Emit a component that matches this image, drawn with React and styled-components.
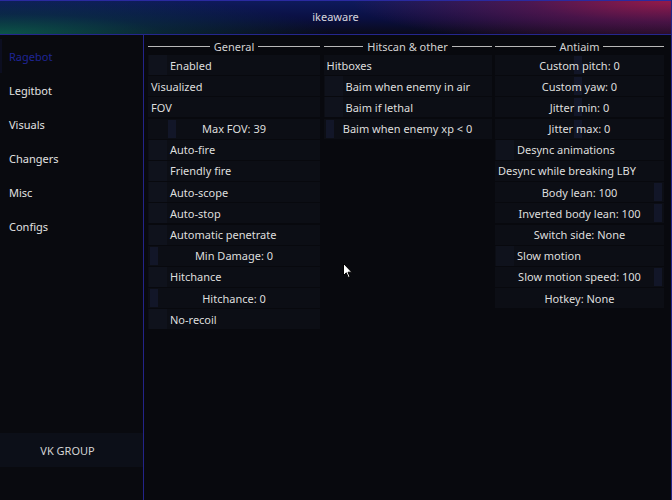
import React from "react";
import styled, { createGlobalStyle } from "styled-components";

const GlobalStyle = createGlobalStyle`
  html, body {
    margin: 0;
    padding: 0;
    background: #08090e;
  }
  body {
    font-family: "Noto Sans", "Open Sans", sans-serif;
    font-size: 11px;
    color: #dcdcdc;
  }
`;

const general = [
  { type: "check", label: "Enabled" },
  { type: "label", label: "Visualized" },
  { type: "label", label: "FOV" },
  { type: "slider", label: "Max FOV: 39", pos: 11 },
  { type: "check", label: "Auto-fire" },
  { type: "check", label: "Friendly fire" },
  { type: "check", label: "Auto-scope" },
  { type: "check", label: "Auto-stop" },
  { type: "check", label: "Automatic penetrate" },
  { type: "slider", label: "Min Damage: 0", pos: 0 },
  { type: "check", label: "Hitchance" },
  { type: "slider", label: "Hitchance: 0", pos: 0 },
  { type: "check", label: "No-recoil" },
];

const hitscan = [
  { type: "label", label: "Hitboxes" },
  { type: "check", label: "Baim when enemy in air" },
  { type: "check", label: "Baim if lethal" },
  { type: "slider", label: "Baim when enemy xp < 0", pos: 0 },
];

const antiaim = [
  { type: "slider", label: "Custom pitch: 0", pos: 49 },
  { type: "slider", label: "Custom yaw: 0", pos: 49 },
  { type: "slider", label: "Jitter min: 0", pos: 49 },
  { type: "slider", label: "Jitter max: 0", pos: 49 },
  { type: "check", label: "Desync animations" },
  { type: "label", label: "Desync while breaking LBY" },
  { type: "slider", label: "Body lean: 100", pos: 100 },
  { type: "slider", label: "Inverted body lean: 100", pos: 100 },
  { type: "bind", label: "Switch side: None" },
  { type: "check", label: "Slow motion" },
  { type: "slider", label: "Slow motion speed: 100", pos: 100 },
  { type: "bind", label: "Hotkey: None" },
];

const tabs = ["Ragebot", "Legitbot", "Visuals", "Changers", "Misc", "Configs"];

const Window = styled.div`
  width: 672px;
  height: 500px;
  box-sizing: border-box;
  display: flex;
  flex-direction: column;
  border-right: 1px solid #23248a;
  position: relative;
  overflow: hidden;
`;

const TitleBar = styled.header`
  flex: none;
  display: flex;
  align-items: center;
  justify-content: center;
  color: #d6d6de;
  font-size: 11px;
  border-top: 1px solid #2a2aa0;
  border-bottom: 1px solid #24268e;
  box-sizing: border-box;
  height: 35px;
  padding-bottom: 3px;
  background:
    radial-gradient(ellipse 320px 46px at 100% 0%, rgba(155, 26, 72, 0.95) 0%, rgba(115, 22, 76, 0.6) 45%, rgba(40, 14, 60, 0) 100%),
    radial-gradient(ellipse 330px 40px at 0% 100%, rgba(12, 88, 76, 0.95) 0%, rgba(10, 62, 72, 0.5) 50%, rgba(10, 40, 70, 0) 100%),
    linear-gradient(to bottom, #0e1a5c 0%, #0a0f40 55%, #090a1a 100%);
`;

const Body = styled.div`
  flex: 1;
  display: flex;
  min-height: 0;
`;

const Sidebar = styled.nav`
  width: 143px;
  flex: none;
  border-right: 1px solid #23248a;
  background: #090a0f;
  display: flex;
  flex-direction: column;
  padding-top: 4px;
  padding-bottom: 33px;
`;

const Tab = styled.div`
  height: 34px;
  display: flex;
  align-items: center;
  padding-left: ${(p) => (p.$active ? "7px" : "9px")};
  font-size: 11px;
  color: ${(p) => (p.$active ? "#1f2596" : "#e2e2e2")};
  border-left: ${(p) => (p.$active ? "2px solid #0c0e20" : "none")};
`;

const Group = styled.div`
  margin-top: auto;
  height: 34px;
  display: flex;
  align-items: center;
  justify-content: center;
  padding-right: 8px;
  background: #0c0f18;
  color: #d4d4d4;
  font-size: 11px;
`;

const Content = styled.main`
  flex: 1;
  padding: 4px 7px 0 4px;
  display: grid;
  grid-template-columns: 172px 168px 169px;
  column-gap: 3.5px;
  align-content: start;
  align-items: start;
  background: #08090e;
`;

const Column = styled.section`
  display: flex;
  flex-direction: column;
`;

const Heading = styled.div`
  height: 15px;
  display: flex;
  align-items: center;
  gap: 4px;
  color: #d2d2d2;
  font-size: 11px;
  margin-bottom: 1px;

  &::before,
  &::after {
    content: "";
    flex: 1;
    height: 1px;
    background: #b8b8b8;
  }
`;

const Rows = styled.div`
  display: flex;
  flex-direction: column;
  gap: 1.2px;
`;

const Row = styled.div`
  height: 20px;
  display: flex;
  align-items: center;
  position: relative;
  background: #0c0e15;
  color: #dedede;
  font-size: 11px;
  white-space: nowrap;
  justify-content: ${(p) => (p.$center ? "center" : "flex-start")};
  padding-left: ${(p) => (p.$center ? "0" : "3px")};
`;

const Box = styled.span`
  width: 18px;
  height: 100%;
  flex: none;
  background: #0f121c;
  margin: 0 3px 0 -2px;
`;

const Track = styled.span`
  position: absolute;
  left: 2px;
  right: 2px;
  top: 0;
  bottom: 0;
`;

const Thumb = styled.span`
  position: absolute;
  top: 1px;
  bottom: 1px;
  width: 8px;
  background: #121628;
`;

const Label = styled.span`
  position: relative;
`;

const Cursor = styled.svg`
  position: absolute;
  left: 343px;
  top: 263px;
`;

function Control({ item }) {
  if (item.type === "check") {
    return (
      <Row>
        <Box />
        <Label>{item.label}</Label>
      </Row>
    );
  }
  if (item.type === "slider") {
    return (
      <Row $center>
        <Track>
          <Thumb style={{ left: `calc(${item.pos}% - ${(item.pos / 100) * 8}px)` }} />
        </Track>
        <Label>{item.label}</Label>
      </Row>
    );
  }
  if (item.type === "bind") {
    return (
      <Row $center>
        <Label>{item.label}</Label>
      </Row>
    );
  }
  return (
    <Row>
      <Label>{item.label}</Label>
    </Row>
  );
}

function Panel({ title, items }) {
  return (
    <Column>
      <Heading>{title}</Heading>
      <Rows>
        {items.map((item, i) => (
          <Control key={i} item={item} />
        ))}
      </Rows>
    </Column>
  );
}

export default function App() {
  return (
    <>
      <GlobalStyle />
      <Window>
        <TitleBar>ikeaware</TitleBar>
        <Body>
          <Sidebar>
            {tabs.map((t, i) => (
              <Tab key={t} $active={i === 0}>
                {t}
              </Tab>
            ))}
            <Group>VK GROUP</Group>
          </Sidebar>
          <Content>
            <Panel title="General" items={general} />
            <Panel title="Hitscan & other" items={hitscan} />
            <Panel title="Antiaim" items={antiaim} />
          </Content>
        </Body>
        <Cursor width="10" height="16" viewBox="0 0 10 16">
          <path d="M0.5 0.5 L0.5 12.5 L3.3 9.8 L5.3 14.5 L7 13.8 L5 9.2 L8.8 9.2 Z" fill="#fff" stroke="#000" strokeWidth="1" />
        </Cursor>
      </Window>
    </>
  );
}
